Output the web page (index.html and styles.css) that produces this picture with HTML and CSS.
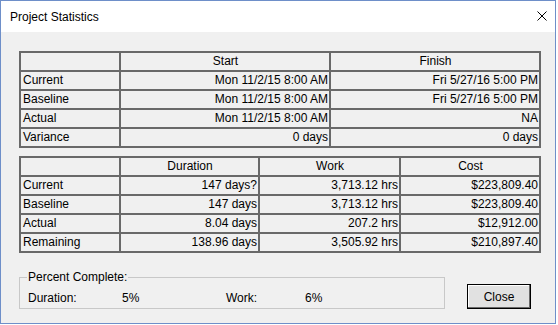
FILE: index.html
```html
<!DOCTYPE html>
<html lang="en">
<head>
  <meta charset="UTF-8">
  <title>Project Statistics</title>
  <link rel="stylesheet" href="styles.css">
</head>
<body>
  <div class="window">
    <div class="titlebar">
      <span class="title">Project Statistics</span>
      <svg class="close-x" width="10" height="10" viewBox="0 0 10 10">
        <path d="M0.5 0.5 L9.5 9.5 M9.5 0.5 L0.5 9.5" stroke="#000" stroke-width="1" fill="none"/>
      </svg>
    </div>
    <div class="content">
      <div class="grid dates">
        <div class="cell"></div>
        <div class="cell head">Start</div>
        <div class="cell head">Finish</div>

        <div class="cell">Current</div>
        <div class="cell num">Mon 11/2/15 8:00 AM</div>
        <div class="cell num">Fri 5/27/16 5:00 PM</div>

        <div class="cell">Baseline</div>
        <div class="cell num">Mon 11/2/15 8:00 AM</div>
        <div class="cell num">Fri 5/27/16 5:00 PM</div>

        <div class="cell">Actual</div>
        <div class="cell num">Mon 11/2/15 8:00 AM</div>
        <div class="cell num">NA</div>

        <div class="cell">Variance</div>
        <div class="cell num">0 days</div>
        <div class="cell num">0 days</div>
      </div>

      <div class="grid totals">
        <div class="cell"></div>
        <div class="cell head">Duration</div>
        <div class="cell head">Work</div>
        <div class="cell head">Cost</div>

        <div class="cell">Current</div>
        <div class="cell num">147 days?</div>
        <div class="cell num">3,713.12 hrs</div>
        <div class="cell num">$223,809.40</div>

        <div class="cell">Baseline</div>
        <div class="cell num">147 days</div>
        <div class="cell num">3,713.12 hrs</div>
        <div class="cell num">$223,809.40</div>

        <div class="cell">Actual</div>
        <div class="cell num">8.04 days</div>
        <div class="cell num">207.2 hrs</div>
        <div class="cell num">$12,912.00</div>

        <div class="cell">Remaining</div>
        <div class="cell num">138.96 days</div>
        <div class="cell num">3,505.92 hrs</div>
        <div class="cell num">$210,897.40</div>
      </div>

      <div class="footer">
        <fieldset class="percent">
          <legend>Percent Complete:</legend>
          <div class="pc-row">
            <span>Duration:</span>
            <span>5%</span>
            <span>Work:</span>
            <span>6%</span>
          </div>
        </fieldset>
        <button class="close-btn">Close</button>
      </div>
    </div>
  </div>
</body>
</html>
```

FILE: styles.css
```css
* {
  margin: 0;
  padding: 0;
  box-sizing: border-box;
}
body {
  background: #fff;
  font-family: "Liberation Sans", Arial, sans-serif;
  font-size: 12px;
  color: #000;
}
.window {
  width: 556px;
  height: 324px;
  border: 1px solid #6e8fc9;
  display: flex;
  flex-direction: column;
}
.titlebar {
  height: 31px;
  background: #fff;
  display: flex;
  align-items: center;
  justify-content: space-between;
  padding: 0 8px 0 9px;
}
.title {
  font-family: "Segoe UI", "Liberation Sans", sans-serif;
  font-size: 12px;
}
.close-x {
  display: block;
  margin-top: -1px;
}
.content {
  flex: 1;
  background: #f0f0f0;
  padding: 19px 0 0 18px;
}
.grid {
  display: grid;
  gap: 2px;
  width: 522px;
  background: #696969;
  border: 2px solid #696969;
  grid-auto-rows: 17px;
}
.dates {
  grid-template-columns: 98px 208px 208px;
}
.totals {
  grid-template-columns: 98px 137px 139px 138px;
  margin-top: 8px;
}
.cell {
  background: #f0f0f0;
  line-height: 17px;
  padding: 0 1px 0 2px;
  white-space: nowrap;
  overflow: hidden;
}
.cell.head {
  text-align: center;
}
.cell.num {
  text-align: right;
}
.footer {
  display: flex;
  align-items: flex-start;
  margin-top: 16px;
}
.percent {
  width: 426px;
  border: 1px solid #c8c8c8;
  padding: 5px 8px 2px 8px;
  font-family: "Segoe UI", "Liberation Sans", sans-serif;
}
.percent legend {
  line-height: 16px;
  padding: 0 1px;
  margin-left: -1px;
}
.pc-row {
  display: grid;
  grid-template-columns: 94px 104px 79px auto;
  line-height: 16px;
}
.close-btn {
  margin: 15px 0 0 22px;
  width: 64px;
  height: 25px;
  background: #e1e1e1;
  border: 1px solid #000;
  box-shadow: inset -1px -1px 0 #696969, inset 1px 1px 0 #fff;
  font-family: "Segoe UI", "Liberation Sans", sans-serif;
  font-size: 12px;
  color: #000;
}
```
